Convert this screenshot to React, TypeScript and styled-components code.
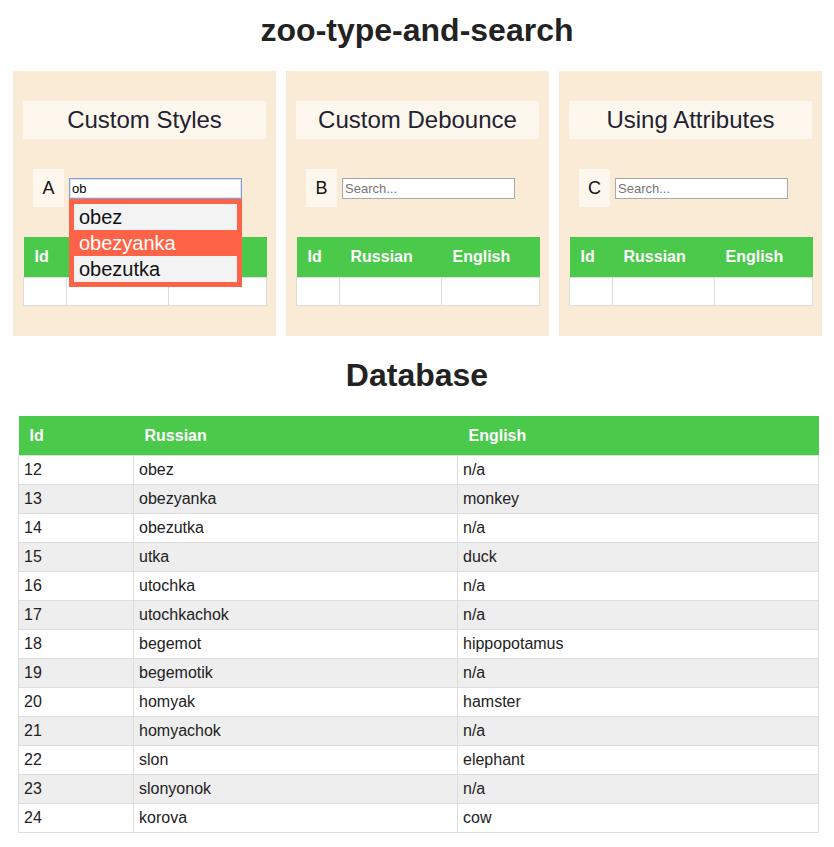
import React from 'react';
import styled, { createGlobalStyle } from 'styled-components';

const GlobalStyle = createGlobalStyle`
  body {
    margin: 0;
    background: #fff;
    color: #222;
    font-family: "Liberation Sans", Arial, sans-serif;
  }
`;

const Page = styled.div`
  width: 834px;
`;

const Title = styled.h1`
  margin: 0;
  padding-top: 12px;
  font-size: 32px;
  line-height: 37px;
  font-weight: bold;
  text-align: center;
`;

const SubTitle = styled.h2`
  margin: 21px 0 22px;
  font-size: 32px;
  line-height: 37px;
  font-weight: bold;
  text-align: center;
`;

const Panels = styled.div`
  display: flex;
  gap: 10px;
  margin-top: 22px;
  padding: 0 11px 0 13px;
`;

const Panel = styled.section`
  width: 263px;
  box-sizing: border-box;
  padding: 30px 10px 30px;
  background: #faebd7;
`;

const PanelHeader = styled.div`
  height: 38px;
  line-height: 38px;
  font-size: 24px;
  text-align: center;
  background: #fdf7ee;
  color: #1f2230;
`;

const SearchRow = styled.div`
  display: flex;
  align-items: center;
  gap: 5px;
  margin: 30px 0;
  padding-left: 10px;
`;

const Letter = styled.div`
  width: 31px;
  height: 38px;
  line-height: 38px;
  text-align: center;
  font-size: 18px;
  background: #fdf7ee;
  color: #111;
`;

const InputWrap = styled.div`
  position: relative;
`;

const SearchInput = styled.input<{ $focused?: boolean }>`
  display: block;
  width: 173px;
  height: 21px;
  box-sizing: border-box;
  margin: 0;
  padding: 0 2px;
  font-family: "Liberation Sans", Arial, sans-serif;
  font-size: 13px;
  color: #000;
  background: #fff;
  border: 1px solid ${(p) => (p.$focused ? '#7f9fd6' : '#a9a9a9')};
  box-shadow: ${(p) => (p.$focused ? 'inset 0 0 0 1px #dce6f7' : 'none')};
  outline: none;
  &::placeholder {
    color: #757575;
  }
`;

const Dropdown = styled.ul`
  position: absolute;
  top: 21px;
  left: 0;
  z-index: 2;
  width: 173px;
  box-sizing: border-box;
  margin: 0;
  padding: 5px;
  list-style: none;
  background: #ff6347;
`;

const Option = styled.li<{ $active?: boolean }>`
  height: 26px;
  line-height: 26px;
  padding-left: 5px;
  font-size: 20px;
  color: ${(p) => (p.$active ? '#fff' : '#111')};
  background: ${(p) => (p.$active ? 'transparent' : '#f3f3f3')};
`;

const SmallTable = styled.table`
  width: 243px;
  border-collapse: collapse;
  table-layout: fixed;
  th {
    height: 40px;
    padding: 0 0 0 11px;
    text-align: left;
    font-size: 16px;
    font-weight: bold;
    color: #fff;
    background: #4bc94b;
  }
  td {
    height: 27px;
    padding: 0;
    background: #fff;
    border: 1px solid #ddd;
  }
`;

const BigTable = styled.table`
  width: 800px;
  margin: 0 0 0 18px;
  border-collapse: collapse;
  table-layout: fixed;
  th {
    height: 39px;
    padding: 0 0 0 11px;
    text-align: left;
    font-size: 16px;
    font-weight: bold;
    color: #fff;
    background: #4bc94b;
  }
  td {
    height: 28px;
    padding: 0 0 0 5px;
    font-size: 16px;
    border: 1px solid #ddd;
  }
  tbody tr:nth-child(even) td {
    background: #eee;
  }
`;

const rows: [number, string, string][] = [
  [12, 'obez', 'n/a'],
  [13, 'obezyanka', 'monkey'],
  [14, 'obezutka', 'n/a'],
  [15, 'utka', 'duck'],
  [16, 'utochka', 'n/a'],
  [17, 'utochkachok', 'n/a'],
  [18, 'begemot', 'hippopotamus'],
  [19, 'begemotik', 'n/a'],
  [20, 'homyak', 'hamster'],
  [21, 'homyachok', 'n/a'],
  [22, 'slon', 'elephant'],
  [23, 'slonyonok', 'n/a'],
  [24, 'korova', 'cow'],
];

function MiniTable() {
  return (
    <SmallTable>
      <colgroup>
        <col style={{ width: 43 }} />
        <col style={{ width: 102 }} />
        <col style={{ width: 98 }} />
      </colgroup>
      <thead>
        <tr>
          <th>Id</th>
          <th>Russian</th>
          <th>English</th>
        </tr>
      </thead>
      <tbody>
        <tr>
          <td />
          <td />
          <td />
        </tr>
      </tbody>
    </SmallTable>
  );
}

function SearchPanel({
  title,
  letter,
  value,
  suggestions,
}: {
  title: string;
  letter: string;
  value?: string;
  suggestions?: string[];
}) {
  return (
    <Panel>
      <PanelHeader>{title}</PanelHeader>
      <SearchRow>
        <Letter>{letter}</Letter>
        <InputWrap>
          <SearchInput
            $focused={!!value}
            placeholder={value ? '' : 'Search...'}
            defaultValue={value}
          />
          {suggestions && (
            <Dropdown>
              {suggestions.map((s, i) => (
                <Option key={s} $active={i === 1}>
                  {s}
                </Option>
              ))}
            </Dropdown>
          )}
        </InputWrap>
      </SearchRow>
      <MiniTable />
    </Panel>
  );
}

export default function App() {
  return (
    <Page>
      <GlobalStyle />
      <Title>zoo-type-and-search</Title>
      <Panels>
        <SearchPanel
          title="Custom Styles"
          letter="A"
          value="ob"
          suggestions={['obez', 'obezyanka', 'obezutka']}
        />
        <SearchPanel title="Custom Debounce" letter="B" />
        <SearchPanel title="Using Attributes" letter="C" />
      </Panels>
      <SubTitle>Database</SubTitle>
      <BigTable>
        <colgroup>
          <col style={{ width: 115 }} />
          <col style={{ width: 324 }} />
          <col style={{ width: 361 }} />
        </colgroup>
        <thead>
          <tr>
            <th>Id</th>
            <th>Russian</th>
            <th>English</th>
          </tr>
        </thead>
        <tbody>
          {rows.map(([id, ru, en]) => (
            <tr key={id}>
              <td>{id}</td>
              <td>{ru}</td>
              <td>{en}</td>
            </tr>
          ))}
        </tbody>
      </BigTable>
    </Page>
  );
}
